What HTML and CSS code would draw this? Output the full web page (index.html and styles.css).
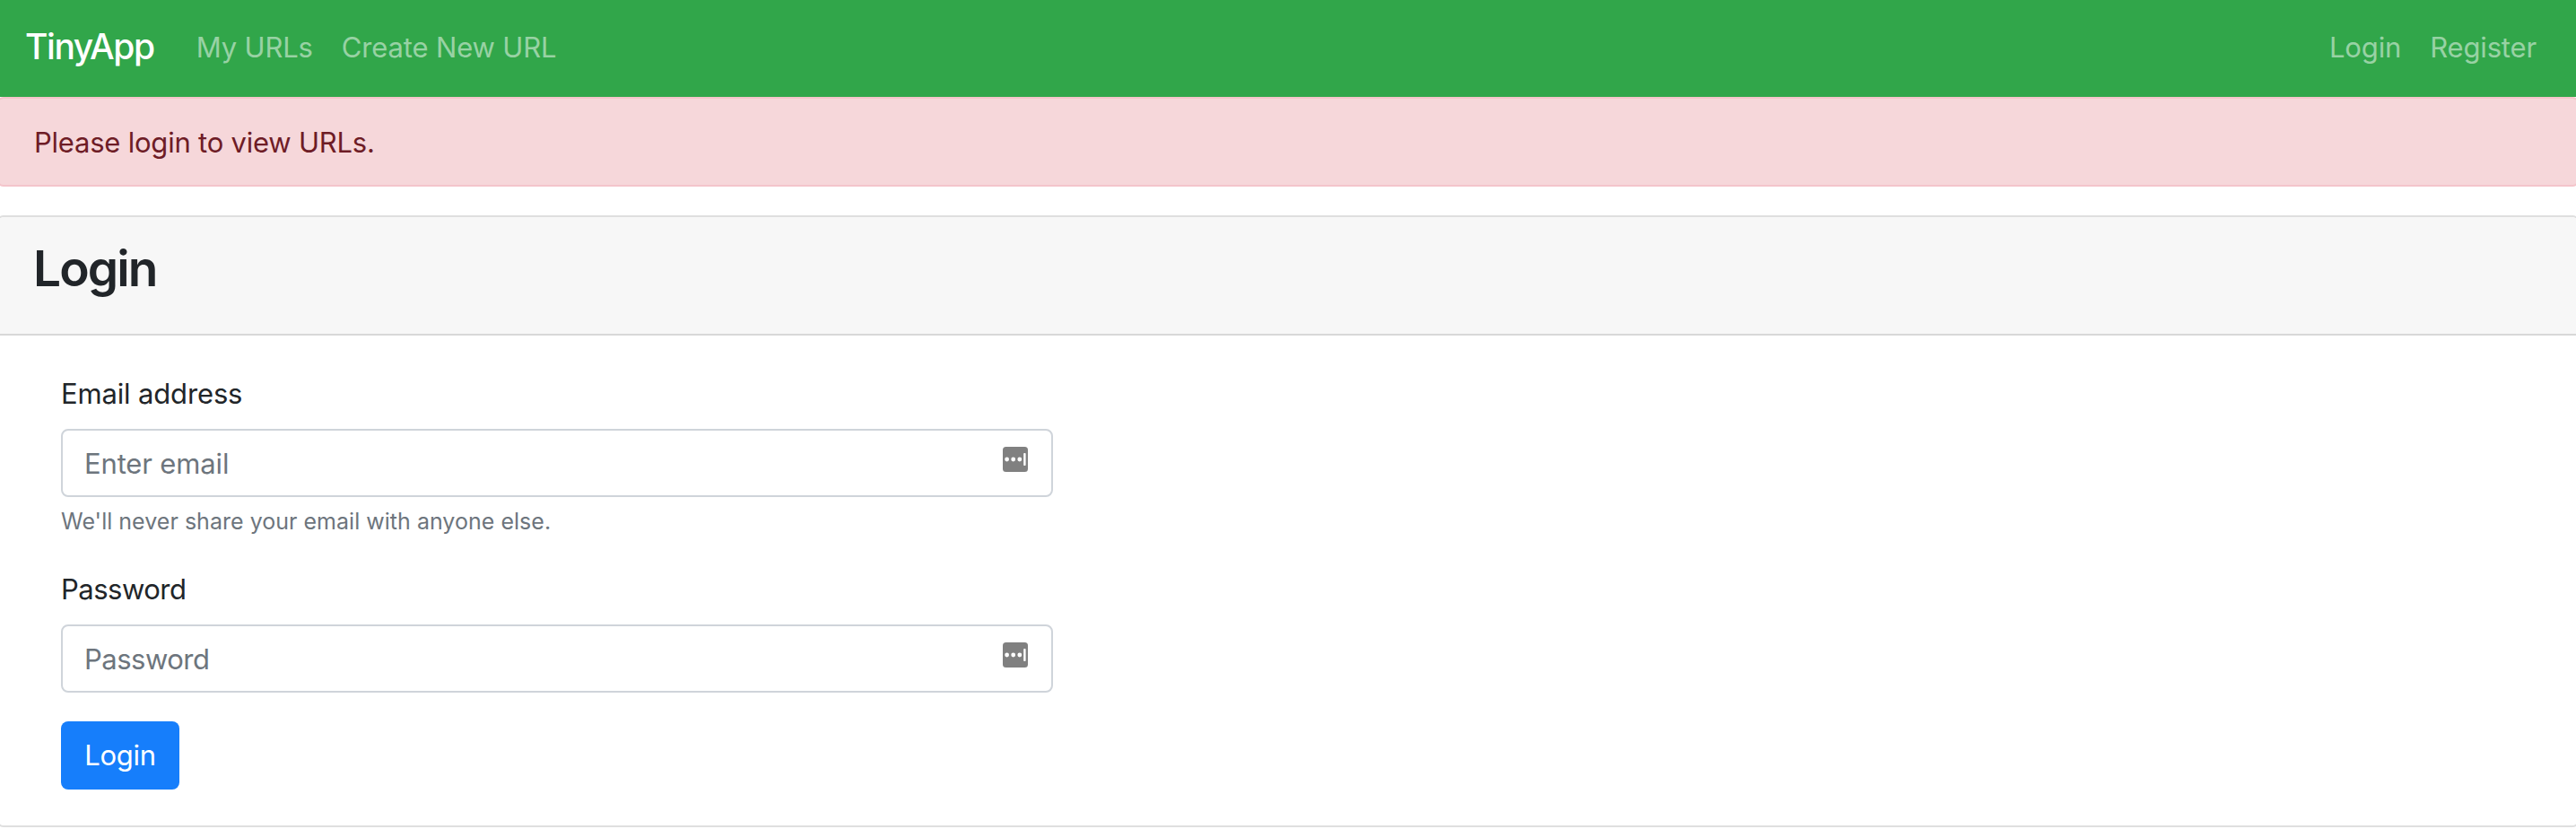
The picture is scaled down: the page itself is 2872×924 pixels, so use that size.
FILE: index.html
```html
<!DOCTYPE html>
<html lang="en">
<head>
<meta charset="utf-8">
<title>TinyApp</title>
<link rel="stylesheet" href="styles.css">
</head>
<body>
<nav class="navbar">
  <a class="brand">TinyApp</a>
  <a class="nav-link">My URLs</a>
  <a class="nav-link">Create New URL</a>
  <div class="nav-right">
    <a class="nav-link">Login</a>
    <a class="nav-link">Register</a>
  </div>
</nav>
<div class="alert">Please login to view URLs.</div>
<main class="card">
  <h3 class="card-header">Login</h3>
  <form class="card-body">
    <div class="form-group">
      <label class="label" for="email">Email address</label>
      <div class="field">
        <input class="input" id="email" type="email" placeholder="Enter email">
        <svg class="field-icon" viewBox="0 0 28 28"><rect width="28" height="28" rx="3.5" fill="#808080"/><g fill="#fff"><circle cx="4.6" cy="14" r="2.4"/><circle cx="11.7" cy="14" r="2.4"/><circle cx="18.8" cy="14" r="2.4"/><rect x="23.2" y="7" width="2.4" height="14" rx=".8"/></g></svg>
      </div>
      <small class="help">We'll never share your email with anyone else.</small>
    </div>
    <div class="form-group">
      <label class="label label-password" for="password">Password</label>
      <div class="field">
        <input class="input input-password" id="password" type="password" placeholder="Password">
        <svg class="field-icon" viewBox="0 0 28 28"><rect width="28" height="28" rx="3.5" fill="#808080"/><g fill="#fff"><circle cx="4.6" cy="14" r="2.4"/><circle cx="11.7" cy="14" r="2.4"/><circle cx="18.8" cy="14" r="2.4"/><rect x="23.2" y="7" width="2.4" height="14" rx=".8"/></g></svg>
      </div>
    </div>
    <button class="btn" type="button">Login</button>
  </form>
</main>
</body>
</html>
```
FILE: styles.css
```css
* { box-sizing: border-box; }
body {
  margin: 0;
  overflow: hidden;
  background: #fff;
  color: #212529;
  font: 430 31px/48px Inter, sans-serif;
  letter-spacing: -.15px;
}
.navbar {
  display: flex;
  align-items: center;
  gap: 32px;
  height: 108px;
  padding: 0 44px 3px 28px;
  background: #31a64a;
}
.brand {
  margin-right: 15px;
  padding-bottom: 1px;
  color: #fff;
  font-size: 39px;
  font-weight: 460;
  letter-spacing: -1.45px;
}
.nav-link { color: rgba(255, 255, 255, .5); }
.nav-right { display: flex; gap: 32px; margin-left: auto; }
.alert {
  height: 100px;
  margin: 0 -4px 32px;
  padding: 25px 40px 23px;
  border: 2px solid #f4c5cb;
  border-radius: 8px;
  background: #f6d7da;
  color: #6e1c26;
  letter-spacing: -.22px;
}
.card {
  margin: 0 -4px;
  border: 2px solid #dfdfdf;
  border-radius: 8px;
  overflow: hidden;
}
.card-header {
  height: 132px;
  margin: 0;
  padding: 22px 40px 0 39px;
  border-bottom: 2px solid #d8d8d8;
  background: #f7f7f7;
  font-size: 55px;
  font-weight: 570;
  line-height: 70px;
  letter-spacing: -1.9px;
}
.card-body {
  display: flex;
  flex-direction: column;
  align-items: flex-start;
  gap: 32px;
  padding: 41px 70px 40px;
}
.form-group { display: flex; flex-direction: column; width: 1106px; }
.label { margin-bottom: 15px; }
.label-password { letter-spacing: -.5px; }
.field { position: relative; height: 76px; }
.input {
  display: block;
  width: 100%;
  height: 76px;
  padding: 1px 24px 0;
  border: 2px solid #cfd4da;
  border-radius: 8px;
  background: #fff;
  color: #495057;
  font: inherit;
  letter-spacing: -.15px;
}
.input::placeholder { color: #6d757d; opacity: 1; }
.input-password { letter-spacing: -.5px; }
.field-icon { position: absolute; top: 20px; right: 28px; width: 28px; height: 28px; }
.help { margin-top: 7px; color: #6d757d; font-size: 25px; line-height: 40px; letter-spacing: .02px; }
.btn {
  width: 132px;
  height: 76px;
  padding: 0;
  border: 0;
  border-radius: 8px;
  background: #167efb;
  color: #fff;
  font: inherit;
  letter-spacing: -.3px;
}
```
